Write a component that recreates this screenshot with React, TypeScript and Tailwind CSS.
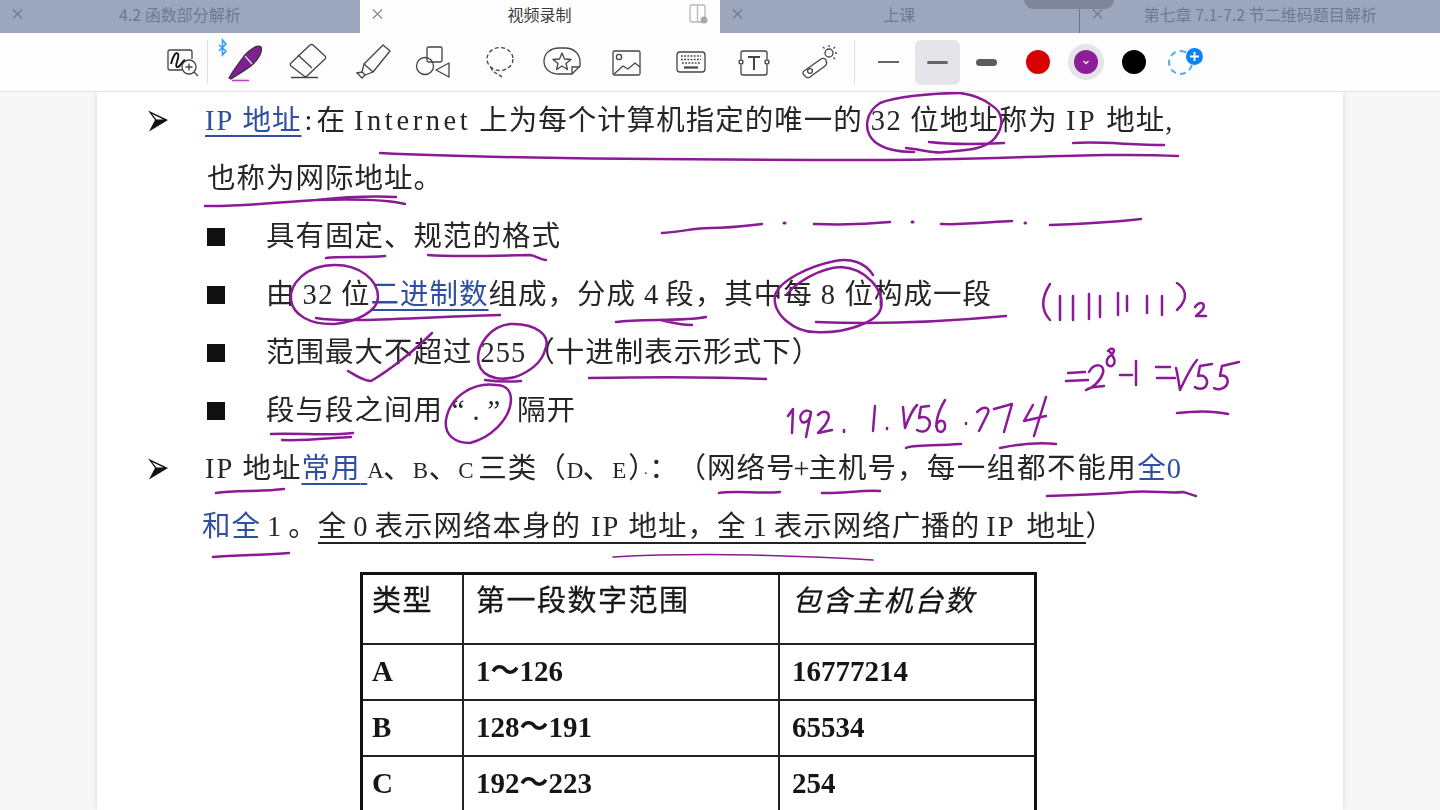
import React from "react";

const M = ({ children, className = "tracking-[1.5px]", flush = false }: { children: React.ReactNode; className?: string; flush?: boolean }) => (
  <span className={(flush ? "" : "mx-[8px] ") + className}>{children}</span>
);
const L = ({ children }: { children: React.ReactNode }) => (
  <span className="inline-block w-[16px] text-[23px] tracking-[0px]">{children}</span>
);
const Blue = ({ children, u = false }: { children: React.ReactNode; u?: boolean }) => (
  <span className={"text-[#2f4f9f] " + (u ? "underline decoration-2 underline-offset-[5px]" : "")}>{children}</span>
);

const Arrow = () => (
  <svg width="24" height="24" viewBox="0 0 24 24" className="block">
    <path d="M3 1.5 L23 11 L4 22.5 L10 11 Z M7 5 L18.5 10.5 L11.5 10.5 Z" fill="#111" fillRule="evenodd" />
  </svg>
);
const Sq = () => <div className="w-[18px] h-[18px] bg-[#111]" />;

function Row({ bullet, children, pad }: { bullet?: "a" | "s"; children: React.ReactNode; pad?: string }) {
  return (
    <div className={"h-[58px] flex items-center whitespace-pre " + (pad ?? "")}>
      {bullet === "a" && <div className="w-[60px] shrink-0"><Arrow /></div>}
      {bullet === "s" && <div className="w-[59px] shrink-0"><Sq /></div>}
      <div>{children}</div>
    </div>
  );
}

function Tab({ title, active, children }: { title: string; active?: boolean; children?: React.ReactNode }) {
  return (
    <div className={"w-[360px] h-full pb-[6px] flex items-center " + (active ? "bg-[#fdfdfd] text-[#3c3c3c]" : "text-[#6f7a90]")}>
      <svg width="36" height="28" viewBox="0 0 36 28" className="shrink-0">
        <path d="M13 9.5 L22 18.5 M22 9.5 L13 18.5" stroke={active ? "#8a8a8a" : "#6f7a90"} strokeWidth="1.2" />
      </svg>
      <div className="flex-1 text-center text-[16px] font-['Noto_Sans_CJK_SC','Noto_Sans',sans-serif]">{title}</div>
      <div className="w-[36px] shrink-0 flex items-center">{children}</div>
    </div>
  );
}

const S = "#444";
const Ico = ({ w = 40, children }: { w?: number; children: React.ReactNode }) => (
  <svg width={w} height="40" viewBox={`0 0 ${w} 40`} fill="none" stroke={S} strokeWidth="1.3" className="block shrink-0 overflow-visible">
    {children}
  </svg>
);

const IconZoom = () => (
  <Ico>
    <path d="M18 28 H6 a2 2 0 0 1 -2 -2 V10 a2 2 0 0 1 2 -2 H26 a2 2 0 0 1 2 2 V17" />
    <path d="M7 22 C9 14 12 9 14 12 C16 15 10 24 13 25 C16 26 18 19 21 18" stroke="#111" strokeWidth="1.9" />
    <circle cx="25" cy="25" r="7" fill="#fdfdfd" />
    <path d="M25 21.5 V28.5 M21.5 25 H28.5 M30 30 L34 34" />
  </Ico>
);
const IconPen = () => (
  <Ico w={44}>
    <path d="M-1 3 L6 9 L2.5 13 V-2 L6 2 L-1 9" stroke="#2a9df4" strokeWidth="1.5" />
    <path d="M9 36 C12 30 18 22 24 14 C30 7 38 2 41 5 C43 9 39 17 32 23 C26 28 17 33 11 37 Z" fill="#7f2191" stroke="#333" strokeWidth="1.2" />
    <path d="M25 14 L32 22" stroke="#ddd" strokeWidth="1.3" />
    <path d="M12 38.5 H29" stroke="#c83cd8" strokeWidth="1.6" />
  </Ico>
);
const IconEraser = () => (
  <Ico>
    <path d="M25 3 L37 14 a2 2 0 0 1 0 3 L19 34 a2 2 0 0 1 -3 0 L3 24 a2 2 0 0 1 0 -3 L22 3 a2 2 0 0 1 3 0 Z" />
    <path d="M10 13 L24 26" />
    <path d="M3 35.5 H30" strokeWidth="1.5" />
  </Ico>
);
const IconHigh = () => (
  <Ico>
    <path d="M30 3 L37 9 L20 30 L11 22 Z" strokeLinejoin="round" />
    <path d="M11 22 L9 30 L12 33 L20 30" />
    <path d="M9 30 L4 31 L9 36 L12 33" />
  </Ico>
);
const IconShapes = () => (
  <Ico>
    <rect x="14" y="5" width="15" height="15" rx="1.5" />
    <circle cx="12" cy="24" r="8.5" />
    <path d="M36 21 V35 L23 28 Z" strokeLinejoin="round" />
  </Ico>
);
const IconLasso = () => (
  <Ico>
    <ellipse cx="20" cy="17" rx="13" ry="11.5" strokeDasharray="4 2.5" />
    <path d="M11 25 C11 30 17 31 22 35" strokeDasharray="4 2" />
  </Ico>
);
const IconStar = () => (
  <Ico>
    <path d="M30 32 H17 C8 32 2 27 2 19 C2 11 9 6 17 6 H23 C32 6 38 12 38 20 V24 Z" />
    <path d="M30 32 V25 H38" />
    <path d="M20 11 L22.5 17 L29 17.5 L24 21.5 L25.5 27.5 L20 24 L14.5 27.5 L16 21.5 L11 17.5 L17.5 17 Z" strokeLinejoin="round" />
  </Ico>
);
const IconImage = () => (
  <Ico>
    <rect x="6" y="9" width="27" height="24" rx="1.5" />
    <circle cx="12" cy="15" r="2.6" />
    <path d="M7 32 L16 24 L21 27 L28 21 L33 25" />
  </Ico>
);
const IconKeyboard = () => (
  <Ico>
    <rect x="6" y="10" width="28" height="20" rx="3" />
    <path d="M10 14 H30 M10 17.5 H30 M11 21 H29" strokeDasharray="1.8 1.4" strokeWidth="1.6" />
    <path d="M13 25.5 H27" strokeWidth="2.2" />
  </Ico>
);
const IconText = () => (
  <Ico>
    <path d="M7 17 V11 a2 2 0 0 1 2 -2 H31 a2 2 0 0 1 2 2 V17 M7 23 V31 a2 2 0 0 0 2 2 H31 a2 2 0 0 0 2 -2 V23" />
    <circle cx="7" cy="20" r="2" />
    <circle cx="33" cy="20" r="2" />
    <path d="M14 15 H26 M20 15 V28" strokeWidth="2" />
  </Ico>
);
const IconLaser = () => (
  <Ico>
    <path d="M5 29 L22 17 a3.5 3.5 0 0 1 5 1 L27 19 a3.5 3.5 0 0 1 -1 5 L11 35 a3.5 3.5 0 0 1 -5 -1 L4 32 a2.5 2.5 0 0 1 1 -3 Z" />
    <circle cx="11" cy="29" r="2.4" />
    <circle cx="30" cy="11" r="4" />
    <path d="M30 3 V5 M36 5 L34.5 6.5 M38 11 H36 M36 17 L34.5 15.5 M24 5 L25.5 6.5" />
  </Ico>
);

const Div = () => <div className="w-px h-[44px] bg-[#dedede] shrink-0" />;

const Ink = () => (
  <svg viewBox="0 92 1440 718" className="absolute left-0 top-0 w-[1440px] h-[718px] pointer-events-none blur-[0.3px]" fill="none" stroke="#8b1a97" strokeWidth="2.5" strokeLinecap="round" strokeLinejoin="round">
    <path d="M380 153 C500 159 700 160 870 160 C1000 160 1100 152 1178 156" />
    <path d="M960 93 C930 93 895 97 880 103 C866 112 862 130 875 142 C885 150 900 152 914 152" />
    <path d="M906 148 C925 150 935 154 945 152 C965 150 985 150 995 138 C1005 125 1003 112 991 105 C985 100 975 95 960 93" />
    <path d="M929 142 C955 145 985 144 1004 143" />
    <path d="M1073 143 C1100 141 1130 145 1164 145" />
    <path d="M205 206 C240 207 280 202 316 200 C345 197 375 196 396 197 M316 200 C350 199 385 199 405 204" />
    <path d="M326 258 C340 256 365 258 385 256" />
    <path d="M428 255 C450 257 490 256 530 255 C537 256 540 260 546 260" />
    <path d="M378 297 C378 280 360 265 335 265 C305 265 289 285 291 300 C293 315 310 325 335 324 C355 322 378 312 378 297" />
    <path d="M316 318 C345 323 400 318 500 315" />
    <path d="M616 322 C640 318 680 322 706 317 M660 320 C670 322 680 325 692 325" />
    <path d="M873 275 C865 262 850 258 835 261 C810 266 780 280 775 295 C772 315 795 332 815 332 C845 334 878 322 881 308 C885 290 865 268 841 267 C820 268 797 282 787 294" />
    <path d="M816 322 C860 324 930 323 1006 316" />
    <path d="M348 371 C355 375 363 381 371 381 C390 370 415 350 432 333" />
    <path d="M545 350 C552 335 535 323 510 324 C490 326 478 345 478 358 C478 375 495 382 515 377 C530 372 542 362 545 350 M485 380 C500 382 510 382 521 381" />
    <path d="M589 378 C640 377 700 376 766 379" />
    <path d="M271 434 C300 433 330 436 353 433 M282 440 C305 441 330 438 351 437" />
    <path d="M496 385 C475 382 450 395 446 420 C444 435 455 443 470 443 C490 438 510 420 511 400 C511 390 505 385 496 385" />
    <path d="M662 233 C680 232 695 228 710 228 C730 228 745 226 762 224" />
    <path d="M814 224 C840 225 870 224 890 222" />
    <path d="M941 224 C965 225 990 222 1012 221" />
    <path d="M1050 225 C1080 224 1115 222 1141 219" />
    <path d="M784 223 h1 M912 222 h1 M1025 223 h.5" strokeWidth="3" />
    <path d="M1050 284 C1043 295 1039 308 1050 320" />
    <path d="M1060 296 V320 M1073 296 V320 M1089 294 V319 M1100 296 V317 M1118 293 V315 M1127 296 V311 M1147 296 V313 M1162 296 V315" />
    <path d="M1177 283 C1185 288 1190 298 1177 310" />
    <path d="M1195 307 C1200 300 1206 303 1203 309 C1200 313 1197 315 1196 316 L1206 316" />
    <path d="M1068 373 L1085 372 M1066 381 L1088 380" />
    <path d="M1089 372 C1094 363 1105 363 1103 373 C1100 382 1092 388 1086 390 C1092 386 1098 387 1104 386" />
    <path d="M1108 351 C1112 346 1118 350 1110 356 C1105 360 1106 367 1112 366 C1118 362 1112 355 1110 352" />
    <path d="M1120 375 H1132 M1136 361 V385" />
    <path d="M1156 367 H1170 M1157 378 H1175" />
    <path d="M1176 368 C1178 376 1179 384 1180 390 C1186 378 1190 368 1197 360" />
    <path d="M1212 364 L1200 366 L1198 376 C1205 374 1209 380 1206 386 C1203 390 1197 389 1195 387" />
    <path d="M1239 362 L1222 366 L1220 376 C1226 374 1230 380 1226 386 C1222 390 1217 390 1214 388" />
    <path d="M1177 413 C1195 411 1215 411 1228 414" />
    <path d="M788 416 L793 409 L792 433" />
    <path d="M811 412 C804 407 797 417 802 422 C807 424 811 418 811 412 L806 437" />
    <path d="M818 415 C824 409 831 412 828 420 C825 427 820 430 818 433 L832 430" />
    <path d="M844 430 v2 M887 428 v1 M966 423 v1" strokeWidth="2.6" />
    <path d="M875 406 L873 431" />
    <path d="M903 407 L905 428 C908 420 912 410 917 405" />
    <path d="M929 406 L921 407 L919 418 C926 415 932 420 929 427 C926 433 920 432 917 430" />
    <path d="M945 400 C938 412 934 425 938 431 C943 434 947 428 944 422 C941 419 937 422 936 426" />
    <path d="M977 412 C985 405 990 408 988 413 L979 431" />
    <path d="M994 409 L1012 404 L1004 432" />
    <path d="M1033 405 L1024 421 L1046 416 M1046 397 L1034 436" />
    <path d="M906 448 C910 445 930 446 961 444" />
    <path d="M1000 448 C1020 444 1040 442 1056 444" />
    <path d="M216 493 C235 490 260 492 284 489" />
    <path d="M719 493 C735 490 760 494 780 492" />
    <path d="M822 493 C840 494 860 490 880 491" />
    <path d="M1047 496 C1080 495 1110 494 1130 492 C1150 490 1170 494 1183 492 C1188 493 1192 495 1196 496" />
    <path d="M213 557 C235 555 265 555 289 553" />
    <path d="M613 557 C650 555 700 554 751 555 C790 556 840 558 873 560" strokeWidth="1.6" />
  </svg>
);

const Cell = ({ children, className = "" }: { children?: React.ReactNode; className?: string }) => (
  <div className={"flex text-[#161616] " + className}>{children}</div>
);
const H = "items-start pt-[5px] border-b-2 border-[#222] font-normal [-webkit-text-stroke:0.3px_#161616] ";
const V = "items-center border-b-2 border-[#222] font-bold font-['Liberation_Serif','Noto_Sans_CJK_SC',serif] tracking-normal ";
const C1 = "pl-[9px] border-r-2 ";
const C2 = "pl-[12px] border-r-2 ";
const C3 = "pl-[12px] ";
const Tip = "tracking-[2px]";

export default function App() {
  return (
    <div className="w-[1440px] h-[810px] overflow-hidden flex flex-col bg-[#f7f7f7]">
      <div className="relative h-[33px] shrink-0 flex bg-[#9ca7be]">
        <Tab title="4.2 函数部分解析" />
        <Tab title="视频录制" active>
          <svg width="24" height="24" viewBox="0 0 24 24" fill="none" stroke="#b8b8b8" strokeWidth="1.3" className="ml-[3px]">
            <rect x="3" y="3" width="15" height="17" rx="2" />
            <path d="M10.5 3 V20" />
            <circle cx="17" cy="18" r="3.5" fill="#a8a8a8" stroke="none" />
          </svg>
        </Tab>
        <Tab title="上课" />
        <div className="w-px h-full bg-[#6f7a8e]" />
        <Tab title="第七章 7.1-7.2 节二维码题目解析" />
        <div className="absolute left-[1024px] top-0 w-[90px] h-[9px] rounded-b-[14px] bg-[#7f869a]" />
      </div>

      <div className="h-[59px] shrink-0 flex items-center bg-[#fdfdfd] border-b border-[#e2e2e2] pl-[164px]">
        <IconZoom />
        <div className="w-[3px]" />
        <Div />
        <div className="w-[12px]" />
        <IconPen />
        <div className="w-[24px]" />
        <IconEraser />
        <div className="w-[25px]" />
        <IconHigh />
        <div className="w-[20px]" />
        <IconShapes />
        <div className="w-[27px]" />
        <IconLasso />
        <div className="w-[22px]" />
        <IconStar />
        <div className="w-[25px]" />
        <IconImage />
        <div className="w-[24px]" />
        <IconKeyboard />
        <div className="w-[23px]" />
        <IconText />
        <div className="w-[25px]" />
        <IconLaser />
        <div className="w-[15px]" />
        <Div />
        <div className="w-[23px]" />
        <div className="w-[21px] h-[2px] bg-[#666]" />
        <div className="w-[16px]" />
        <div className="w-[45px] h-[45px] rounded-[6px] bg-[#e5e4e8] flex items-center justify-center">
          <div className="w-[21px] h-[3px] rounded-full bg-[#666]" />
        </div>
        <div className="w-[16px]" />
        <div className="w-[21px] h-[7px] rounded-full bg-[#5c5c5e]" />
        <div className="w-[29px]" />
        <div className="w-[24px] h-[24px] rounded-full bg-[#d90000]" />
        <div className="w-[18px]" />
        <div className="w-[36px] h-[36px] rounded-full bg-[#e5e4e8] flex items-center justify-center">
          <div className="w-[24px] h-[24px] rounded-full bg-[#8c1f97] flex items-center justify-center">
            <svg width="10" height="10" viewBox="0 0 10 10" fill="none" stroke="#f3e6f5" strokeWidth="1.4"><path d="M2.5 4 L5 6.5 L7.5 4" /></svg>
          </div>
        </div>
        <div className="w-[18px]" />
        <div className="w-[24px] h-[24px] rounded-full bg-black" />
        <div className="w-[22px]" />
        <div className="relative w-[25px] h-[25px] rounded-full border-2 border-dashed border-[#58aee6]">
          <div className="absolute -top-[4px] left-[16px] w-[17px] h-[17px] rounded-full bg-[#0a84f5] flex items-center justify-center">
            <svg width="11" height="11" viewBox="0 0 11 11" stroke="#fff" strokeWidth="1.8"><path d="M5.5 1 V10 M1 5.5 H10" /></svg>
          </div>
        </div>
      </div>

      <div className="relative flex-1 min-h-0 overflow-hidden">
        <div className="ml-[97px] w-[1246px] h-full bg-white shadow-[0_0_6px_rgba(0,0,0,0.12)] text-[28.5px] tracking-[1px] text-[#262626] font-['Liberation_Serif','Noto_Sans_CJK_SC',sans-serif] font-normal blur-[0.35px]">
          <Row bullet="a" pad="pl-[48px]">
            <Blue u><M flush className={Tip}>IP</M> 地址</Blue><span className="ml-[3px] mr-[3px]">:</span>在<M className="tracking-[3.6px]">Internet</M>上为每个计算机指定的唯一的<M>32</M>位地址称为<M className="tracking-[3.5px]">IP</M>地址,
          </Row>
          <Row pad="pl-[110px]">也称为网际地址。</Row>
          <Row bullet="s" pad="pl-[110px]">具有固定、规范的格式</Row>
          <Row bullet="s" pad="pl-[110px]">由<M flush className="mx-[7px] tracking-[1.5px]">32</M>位<Blue u>二进制数</Blue>组成，分成<M flush className="ml-[8px] mr-[6px]">4</M>段，其中每<M>8</M>位构成一段</Row>
          <Row bullet="s" pad="pl-[110px]">范围最大不超过<M flush className="ml-[8px]">255</M>（十进制表示形式下）</Row>
          <Row bullet="s" pad="pl-[110px]">段与段之间用<span className="inline-block w-[74px] text-center tracking-[8px]">“.”</span>隔开</Row>
          <Row bullet="a" pad="pl-[48px]">
            <M flush className={Tip}>IP</M> 地址<Blue u>常用{"\u2009"}</Blue><L>A</L>、<L>B</L>、<L>C</L><span className="ml-[4px]">三类</span>（<L>D</L>、<L>E</L>）<span className="text-[14px]">·</span>：<span className="ml-[13px]">（</span>网络号<span className="-mx-[2px]">+</span>主机号，<span className="tracking-[1.6px]">每一组都不能用</span><Blue>全<span>0</span></Blue>
          </Row>
          <Row pad="pl-[105px]">
            <Blue>和全</Blue><M flush className="mx-[6px]">1</M>。<span className="border-b-2 border-[#222]">全<M flush className="mx-[6px]">0</M>表示网络本身的<M flush className="ml-[10px] mr-[8px] tracking-[2px]">IP</M>地址，全<M flush className="mx-[6px]">1</M>表示网络广播的<M flush className="ml-[6px] mr-[11px] tracking-[2px]">IP</M>地址</span>）
          </Row>

          <div className="mt-[16px] ml-[263px] w-[677px] border-[3px] border-[#111] grid grid-cols-[101px_316px_1fr] grid-rows-[70px_56px_56px_56px] text-[29px] tracking-[1.5px] text-[#161616]">
            <Cell className={H + C1}>类型</Cell>
            <Cell className={H + C2}>第一段数字范围</Cell>
            <Cell className={H + C3 + "italic"}>包含主机台数</Cell>
            <Cell className={V + C1}>A</Cell>
            <Cell className={V + C2}>1～126</Cell>
            <Cell className={V + C3}>16777214</Cell>
            <Cell className={V + C1}>B</Cell>
            <Cell className={V + C2}>128～191</Cell>
            <Cell className={V + C3}>65534</Cell>
            <Cell className={V + C1}>C</Cell>
            <Cell className={V + C2}>192～223</Cell>
            <Cell className={V + C3}>254</Cell>
          </div>
        </div>
        <Ink />
      </div>
    </div>
  );
}
